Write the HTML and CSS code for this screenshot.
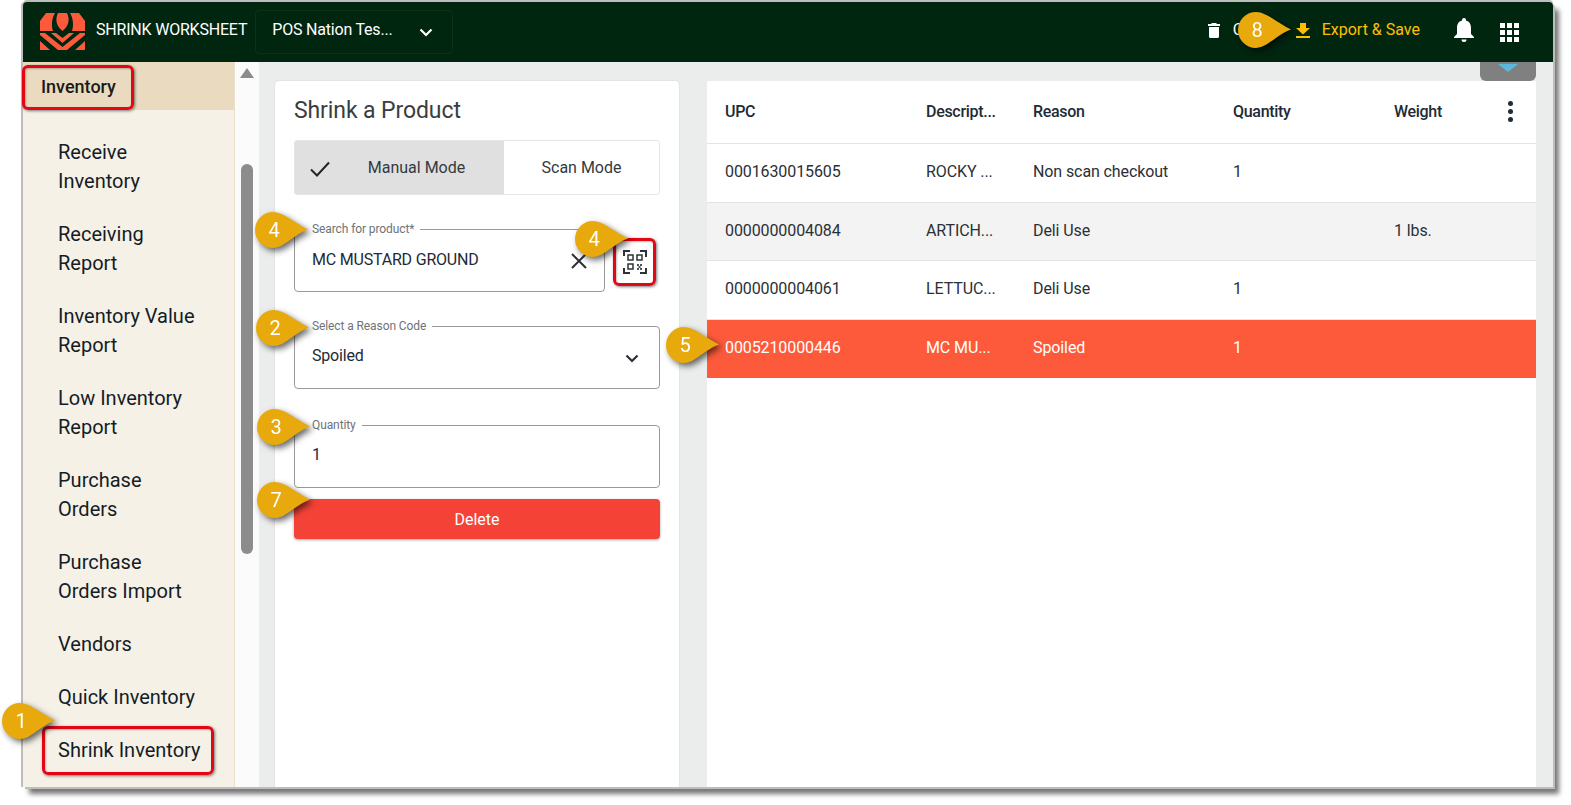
FILE: index.html
```html
<!DOCTYPE html>
<html lang="en">
  <head>
    <meta charset="UTF-8" />
    <meta name="viewport" content="width=device-width, initial-scale=1.0" />
    <title>Shrink Worksheet</title>
    <link rel="stylesheet" href="styles.css">
  </head>
  <body>
    <svg class="defs" width="0" height="0">
      <symbol id="pin-shape" viewBox="0 0 53 36">
        <path d="M18 0C28 0 38 10 53 17.500C38 23 29 36 18 36A18 18 0 0 1 18 0Z" />
      </symbol>
    </svg>

    <div class="window">
      <header class="topbar">
        <svg class="logo" viewBox="0 0 45 37">
          <path d="M6 0h9C12 5 11 12 13 18H0V8Z M18 0h9c3 6 2 13-4.500 18C16 13 15 6 18 0Z M39 0h-9c3 5 4 12 2 18h13V8Z" />
          <path d="M11 20h5l6.500 5 6.500-5h5L22.500 30Z M0 20h5l17.500 14L40 20h5v2L27 37h-9L0 22Z M0 28l10 9H0Z M45 28l-10 9h10Z" />
        </svg>
        <span class="app-title">SHRINK WORKSHEET</span>
        <div class="store-select">
          <span>POS Nation Tes...</span>
          <svg class="icon-chevron" viewBox="0 0 14 9"><path d="M1.500 1.500 7 7l5.500-5.500" /></svg>
        </div>
        <div class="topbar-actions">
          <button class="action clear-action">
            <svg class="icon-trash" viewBox="0 0 12 15"><path d="M4 0h4l1 1h3v2H0V1h3ZM1 4h10v9.500a1.500 1.500 0 0 1-1.500 1.500h-7A1.500 1.500 0 0 1 1 13.500Z" /></svg>
            <span>Clear</span>
          </button>
          <button class="action export-action">
            <svg class="icon-download" viewBox="0 0 14 15"><path d="M4 0h6v5h4L7 11.500 0 5h4ZM0 13h14v2H0Z" /></svg>
            <span>Export &amp; Save</span>
          </button>
          <svg class="icon-bell" viewBox="0 0 20 24"><path d="M10 0a2 2 0 0 1 2 2v.600C15.500 3.500 17 6.500 17 10v6l3 3v1H0v-1l3-3v-6c0-3.500 1.500-6.500 5-7.400V2a2 2 0 0 1 2-2ZM7.500 21.500h5a2.500 2.500 0 0 1-5 0Z" /></svg>
          <div class="icon-apps">
            <i></i><i></i><i></i><i></i><i></i><i></i><i></i><i></i><i></i>
          </div>
        </div>
      </header>

      <div class="content">
        <nav class="sidebar">
          <div class="sidebar-head">Inventory</div>
          <ul class="nav-list">
            <li>Receive<br>Inventory</li>
            <li>Receiving<br>Report</li>
            <li>Inventory Value<br>Report</li>
            <li>Low Inventory<br>Report</li>
            <li>Purchase<br>Orders</li>
            <li>Purchase<br>Orders Import</li>
            <li>Vendors</li>
            <li>Quick Inventory</li>
            <li>Shrink Inventory</li>
          </ul>
        </nav>
        <div class="scrollbar">
          <div class="scroll-up"></div>
          <div class="scroll-thumb"></div>
        </div>

        <main class="main">
          <section class="form-card">
            <h1>Shrink a Product</h1>
            <div class="mode-toggle">
              <div class="mode mode-active">
                <svg class="icon-check" viewBox="0 0 20 16"><path d="M1 8.500 7 14.500 19 1.500" /></svg>
                <span>Manual Mode</span>
              </div>
              <div class="mode">Scan Mode</div>
            </div>

            <div class="search-row">
              <div class="field field-search">
                <label>Search for product*</label>
                <span class="field-value">MC MUSTARD GROUND</span>
                <svg class="icon-close" viewBox="0 0 16 16"><path d="M1 1l14 14M15 1 1 15" /></svg>
              </div>
              <svg class="icon-scan" viewBox="0 0 24 24">
                <path class="scan-corners" d="M1 6V1h6M17 1h6v6M1 18v5h6M17 23h6v-5" />
                <path class="scan-boxes" d="M5 5h5v5H5ZM14 5h5v5h-5ZM5 14h5v5H5Z" />
                <path class="scan-dots" d="M14 14h2v2h-2ZM17 14h2v2h-2ZM15.500 16h2v2h-2ZM14 18h2v2h-2ZM17 18h2v2h-2Z" />
              </svg>
            </div>

            <div class="field field-reason">
              <label>Select a Reason Code</label>
              <span class="field-value">Spoiled</span>
              <svg class="icon-chevron icon-chevron-dark" viewBox="0 0 14 9"><path d="M1.500 1.500 7 7l5.500-5.500" /></svg>
            </div>

            <div class="field field-qty">
              <label>Quantity</label>
              <span class="field-value">1</span>
            </div>

            <button class="delete-btn">Delete</button>
          </section>

          <section class="table-card">
            <div class="row row-head">
              <span>UPC</span>
              <span>Descript...</span>
              <span>Reason</span>
              <span>Quantity</span>
              <span>Weight</span>
              <span class="kebab"><i></i><i></i><i></i></span>
            </div>
            <div class="row">
              <span>0001630015605</span>
              <span>ROCKY ...</span>
              <span>Non scan checkout</span>
              <span>1</span>
              <span></span>
            </div>
            <div class="row row-alt">
              <span>0000000004084</span>
              <span>ARTICH...</span>
              <span>Deli Use</span>
              <span></span>
              <span>1 lbs.</span>
            </div>
            <div class="row">
              <span>0000000004061</span>
              <span>LETTUC...</span>
              <span>Deli Use</span>
              <span>1</span>
              <span></span>
            </div>
            <div class="row row-selected">
              <span>0005210000446</span>
              <span>MC MU...</span>
              <span>Spoiled</span>
              <span>1</span>
              <span></span>
            </div>
          </section>
          <div class="collapse-tab"></div>
        </main>
      </div>
    </div>

    <!-- annotations drawn over the screenshot -->
    <div class="mark mark-inventory"></div>
    <div class="mark mark-shrink"></div>
    <div class="mark mark-scan"></div>

    <div class="pin pin-1"><svg><use href="#pin-shape" /></svg><span>1</span></div>
    <div class="pin pin-2"><svg><use href="#pin-shape" /></svg><span>2</span></div>
    <div class="pin pin-3"><svg><use href="#pin-shape" /></svg><span>3</span></div>
    <div class="pin pin-4a"><svg><use href="#pin-shape" /></svg><span>4</span></div>
    <div class="pin pin-4b"><svg><use href="#pin-shape" /></svg><span>4</span></div>
    <div class="pin pin-5"><svg><use href="#pin-shape" /></svg><span>5</span></div>
    <div class="pin pin-7"><svg><use href="#pin-shape" /></svg><span>7</span></div>
    <div class="pin pin-8"><svg><use href="#pin-shape" /></svg><span>8</span></div>
  </body>
</html>
```

FILE: styles.css
```css
*,
*::before,
*::after {
  box-sizing: border-box;
  margin: 0;
  padding: 0;
  font-family: Roboto, "Liberation Sans", sans-serif;
}
html,
body {
  height: 805px;
  overflow: hidden;
  background: #fff;
}
body {
  position: relative;
  padding: 2px 0 0 23px;
}
.defs {
  position: absolute;
}
button {
  background: none;
  border: none;
  font-size: 16px;
}

.window {
  display: flex;
  flex-direction: column;
  width: 1530px;
  height: 785px;
  border-radius: 4px 4px 0 0;
  box-shadow: -2px 0 0 #bdbdbd, 0 -2px 0 #bdbdbd, 2px 2px 0 #bdbdbd, 6px 7px 5px #777;
  overflow: hidden;
}

/* top bar */
.topbar {
  display: flex;
  align-items: center;
  flex: none;
  height: 60px;
  padding: 0 34px 0 17px;
  background: #012610;
  color: #fff;
}
.logo {
  flex: none;
  width: 45px;
  height: 37px;
  margin-bottom: 2px;
  fill: #fd5a3b;
}
.app-title {
  margin: 0 0 6px 11px;
  font-size: 16px;
  letter-spacing: -0.2px;
  white-space: nowrap;
}
.store-select {
  display: flex;
  align-items: center;
  justify-content: space-between;
  width: 198px;
  height: 44px;
  margin-left: 8px;
  padding: 0 19px 0 16px;
  border: 1px solid #0b3319;
  border-radius: 4px;
  font-size: 16px;
  letter-spacing: -0.2px;
}
.store-select span {
  margin-bottom: 6px;
}
.icon-chevron {
  width: 14px;
  height: 9px;
  fill: none;
  stroke: #fff;
  stroke-width: 2.200;
}
.topbar-actions {
  display: flex;
  align-items: center;
  margin-left: auto;
}
.action {
  display: flex;
  align-items: center;
  color: #fff;
}
.action span {
  margin-bottom: 6px;
}
.clear-action {
  gap: 13px;
  width: 88px;
}
.icon-trash {
  width: 12px;
  height: 15px;
  margin-bottom: 4px;
  fill: #fff;
}
.export-action {
  gap: 12px;
  color: #fdc000;
}
.icon-download {
  width: 14px;
  height: 15px;
  margin-bottom: 4px;
  fill: #fdc000;
}
.icon-bell {
  width: 20px;
  height: 24px;
  margin: 0 0 4px 34px;
  fill: #fff;
}
.icon-apps {
  display: grid;
  grid-template-columns: repeat(3, 5px);
  gap: 2px;
  margin-left: 26px;
}
.icon-apps i {
  width: 5px;
  height: 5px;
  background: #fff;
}

/* body */
.content {
  display: flex;
  flex: 1;
  min-height: 0;
}
.sidebar {
  flex: none;
  width: 212px;
  background: #f6f1e6;
  border-right: 1px solid #eadfcb;
  overflow: hidden;
}
.sidebar-head {
  height: 48px;
  padding-left: 18px;
  background: #eadbc0;
  color: #1a1a1a;
  font-size: 18px;
  font-weight: 500;
  line-height: 50px;
}
.nav-list {
  padding: 28px 0 0 35px;
  list-style: none;
}
.nav-list li {
  margin-bottom: 24px;
  color: #141c26;
  font-size: 20px;
  line-height: 29px;
  white-space: nowrap;
}
.scrollbar {
  position: relative;
  flex: none;
  width: 24px;
  background: #fbfbfb;
}
.scroll-up {
  width: 0;
  margin: 6px auto 0;
  border-left: 7.500px solid transparent;
  border-right: 7.500px solid transparent;
  border-bottom: 10px solid #8c8c8c;
}
.scroll-thumb {
  width: 12px;
  height: 390px;
  margin: 86px 0 0 6px;
  border-radius: 6px;
  background: #8c8c8c;
}

.main {
  position: relative;
  display: flex;
  flex: 1;
  gap: 28px;
  min-width: 0;
  padding: 19px 17px 0 16px;
  background: #ebeded;
}
.form-card {
  flex: none;
  width: 404px;
  padding: 16px 19px 0 19px;
  border-radius: 4px 4px 0 0;
  background: #fff;
  box-shadow: 0 0 2px rgba(0, 0, 0, 0.12);
}
h1 {
  color: #3a3d40;
  font-size: 23px;
  font-weight: 400;
  letter-spacing: -0.1px;
  line-height: 28px;
}
.mode-toggle {
  display: flex;
  height: 55px;
  margin-top: 15px;
  border: 1px solid #e6e6e6;
  border-radius: 3px;
  color: #333a40;
  font-size: 16px;
}
.mode {
  display: flex;
  align-items: center;
  justify-content: center;
  flex: 1;
}
.mode-active {
  flex: none;
  position: relative;
  width: 209px;
  padding-left: 34px;
  background: #e0e0e0;
}
.icon-check {
  position: absolute;
  left: 15px;
  top: 20px;
  width: 20px;
  height: 16px;
  fill: none;
  stroke: #22262a;
  stroke-width: 2;
}

.search-row {
  display: flex;
  align-items: flex-start;
  margin-top: 34px;
}
.field {
  position: relative;
  display: flex;
  align-items: flex-start;
  justify-content: space-between;
  height: 63px;
  padding: 19px 18px 0 17px;
  border: 1px solid #999;
  border-radius: 4px;
}
.field-search {
  width: 311px;
  padding-top: 20px;
}
.field label {
  position: absolute;
  top: -8px;
  left: 11px;
  padding: 0 6px;
  background: #fff;
  color: #6e7378;
  font-size: 12px;
  letter-spacing: -0.1px;
  line-height: 14px;
}
.field-value {
  color: #212b36;
  font-size: 16px;
  letter-spacing: -0.2px;
  line-height: 19px;
}
.icon-close {
  width: 16px;
  height: 16px;
  margin: 3px -1px 0 0;
  fill: none;
  stroke: #2b3036;
  stroke-width: 2;
}
.icon-scan {
  flex: none;
  width: 24px;
  height: 24px;
  margin: 21px 0 0 18px;
  fill: none;
  stroke: #2e3339;
}
.scan-corners {
  stroke-width: 2;
}
.scan-boxes {
  stroke-width: 1.500;
}
.scan-dots {
  fill: #555;
  stroke: none;
}
.field-reason {
  margin-top: 34px;
  padding-right: 20px;
}
.icon-chevron-dark {
  margin-top: 8px;
  stroke: #2b3036;
}
.field-qty {
  margin-top: 36px;
}
.delete-btn {
  display: block;
  width: 100%;
  height: 40px;
  margin-top: 11px;
  border-radius: 4px;
  background: #f44336;
  box-shadow: 0 1px 3px rgba(0, 0, 0, 0.35);
  color: #fff;
}

/* table */
.table-card {
  flex: 1;
  min-width: 0;
  background: #fff;
}
.row {
  display: grid;
  grid-template-columns: 201px 107px 200px 161px 100px 1fr;
  align-items: center;
  height: 58.500px;
  padding: 0 0 2px 18px;
  border-bottom: 1px solid #e4e4e4;
  color: #2b3036;
  font-size: 16px;
  letter-spacing: -0.1px;
}
.row span {
  white-space: nowrap;
}
.row-head {
  height: 63px;
  color: #212b36;
  font-weight: 500;
  letter-spacing: -0.3px;
}
.row-alt {
  background: #f3f3f3;
}
.row-selected {
  background: #fd5a3b;
  border-bottom: none;
  color: #fff;
}
.kebab {
  display: flex;
  flex-direction: column;
  gap: 3px;
  width: 5px;
  margin-left: 14px;
}
.kebab i {
  width: 5px;
  height: 5px;
  border-radius: 50%;
  background: #212b36;
}
.collapse-tab {
  position: absolute;
  top: 0;
  right: 17px;
  width: 56px;
  height: 19px;
  padding-top: 2px;
  border-radius: 0 0 6px 6px;
  background: #808080;
}
.collapse-tab::after {
  content: "";
  display: block;
  width: 0;
  margin: 0 auto;
  border-left: 10px solid transparent;
  border-right: 10px solid transparent;
  border-top: 8px solid #5bb8dc;
}

/* annotations */
.mark {
  position: absolute;
  border: 3px solid #e30613;
  border-radius: 6px;
  box-shadow: 1px 1px 3px rgba(0, 0, 0, 0.5), inset 1px 1px 2px rgba(0, 0, 0, 0.25);
}
.mark-inventory {
  left: 22px;
  top: 65px;
  width: 112px;
  height: 45px;
}
.mark-shrink {
  left: 42px;
  top: 726px;
  width: 172px;
  height: 49px;
}
.mark-scan {
  left: 613px;
  top: 238px;
  width: 43px;
  height: 48px;
}
.pin {
  position: absolute;
  width: 53px;
  height: 36px;
  filter: drop-shadow(3px 3px 3px rgba(0, 0, 0, 0.6));
}
.pin svg {
  display: block;
  width: 53px;
  height: 36px;
  fill: #e8a90c;
}
.pin span {
  position: absolute;
  left: 0;
  top: 0;
  width: 38px;
  color: #fff;
  font-size: 20px;
  line-height: 36px;
  text-align: center;
}
.pin-1 { left: 2px; top: 703px; }
.pin-2 { left: 256px; top: 310px; }
.pin-3 { left: 257px; top: 409px; }
.pin-4a { left: 255px; top: 212px; }
.pin-4b { left: 575px; top: 221px; }
.pin-5 { left: 666px; top: 327px; }
.pin-7 { left: 257px; top: 482px; }
.pin-8 { left: 1238px; top: 12px; }
```
